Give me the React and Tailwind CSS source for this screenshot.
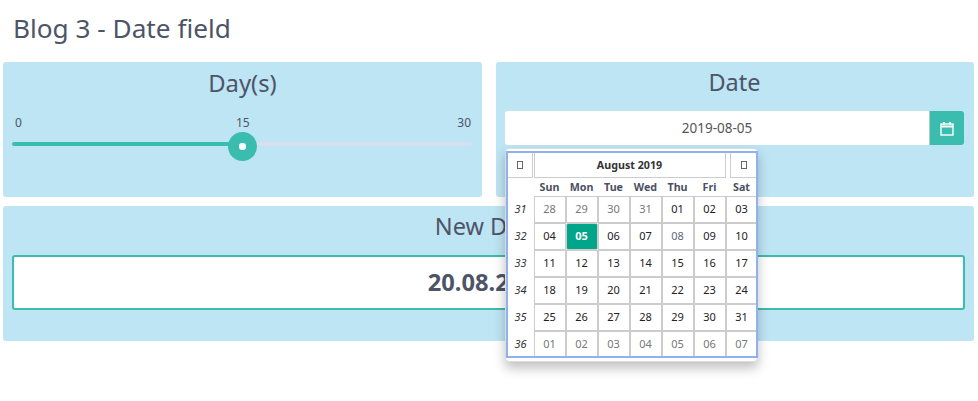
const weeks = [
  { no: 31, days: ["28", "29", "30", "31", "01", "02", "03"] },
  { no: 32, days: ["04", "05", "06", "07", "08", "09", "10"] },
  { no: 33, days: ["11", "12", "13", "14", "15", "16", "17"] },
  { no: 34, days: ["18", "19", "20", "21", "22", "23", "24"] },
  { no: 35, days: ["25", "26", "27", "28", "29", "30", "31"] },
  { no: 36, days: ["01", "02", "03", "04", "05", "06", "07"] },
];
const dayNames = ["Sun", "Mon", "Tue", "Wed", "Thu", "Fri", "Sat"];

// 8월 밖의 날짜는 회색
const isMuted = (w, i) => (w === 0 && i < 4) || w === 5;

function Tofu() {
  return <span className="block w-[6px] h-[8px] border border-[#666]" />;
}

function CalendarIcon() {
  return (
    <svg width="14" height="15" viewBox="0 0 14 15" fill="none" stroke="#fff" strokeWidth="1.4">
      <rect x="1" y="3" width="12" height="11" />
      <path d="M1 5.5h12" strokeWidth="2" />
      <path d="M4 1v3M10 1v3" strokeWidth="2" />
    </svg>
  );
}

function Calendar() {
  return (
    <div className="absolute left-[9px] top-[86px] z-10 w-[253px] h-[214px] bg-white rounded-[4px] border border-[#dcdcdc] pt-[2px] shadow-[0_6px_12px_rgba(0,0,0,0.25)]">
      <div className="h-[207px] -mr-px pl-px pt-px outline-2 -outline-offset-2 outline-[#8fb2ee]">
        <div className="flex h-[26px]">
          <div className="w-[26px] flex items-center justify-center border border-[#ccc]"><Tofu /></div>
          <div className="w-[192px] ml-px flex items-center justify-center border border-[#ccc] pr-px text-[10.7px] font-bold text-[#333]">August 2019</div>
          <div className="w-[28px] ml-[4px] flex items-center justify-center border border-[#ccc]"><Tofu /></div>
        </div>
        <div className="grid grid-cols-[27px_repeat(7,32px)] h-[18px] items-center text-center text-[10.7px] font-bold text-[#4a4f63]">
          <span />
          {dayNames.map((d) => <span key={d} className="pr-px">{d}</span>)}
        </div>
        {weeks.map((week, w) => (
          <div key={week.no} className="grid grid-cols-[27px_repeat(7,32px)] h-[27px] text-[11px]">
            <span className="flex items-center justify-center italic text-[#333]">{week.no}</span>
            {week.days.map((d, i) => {
              const selected = w === 1 && i === 1;
              let cls = "text-[#222]";
              if (selected) cls = "bg-[#00a58a] border-[#00a58a] text-white font-bold rounded-[2px]";
              else if (isMuted(w, i)) cls = "text-[#777]";
              else if (w === 1 && i === 4) cls = "text-[#667]";
              return (
                <span key={i} className={`flex items-center justify-center border border-[#ccc] pr-px ${cls}`}>{d}</span>
              );
            })}
          </div>
        ))}
      </div>
    </div>
  );
}

export default function App() {
  return (
    <div className="w-[978px] h-[401px] bg-white text-[#4e5468] font-['Noto_Sans','Open_Sans',sans-serif] overflow-hidden">
      <h2 className="pl-[13px] pt-[10px] h-[62px] text-[26.2px] leading-[36px]">Blog 3 - Date field</h2>

      <div className="flex gap-[14px] pl-[3px] pr-[4px]">
        <div className="w-[479px] h-[135px] bg-[#bee5f4] rounded-[3px] px-[9px] pt-[6px]">
          <div className="text-center text-[23.8px] leading-[30px]">Day(s)</div>
          <div className="relative mt-[17px]">
            <div className="relative h-[16px] text-[12px] leading-[16px]">
              <span className="absolute left-[3px]">0</span>
              <span className="absolute left-[224px]">15</span>
              <span className="absolute right-[2px]">30</span>
            </div>
            <div className="mt-[11px] h-1 rounded-full bg-[#d8dff0] w-[460px]">
              <div className="h-1 rounded-full bg-[#3abcae] w-[231px]" />
            </div>
            <div className="absolute left-[216px] top-[17px] w-[29px] h-[29px] rounded-full bg-[#3abcae] flex items-center justify-center">
              <span className="w-[7px] h-[7px] rounded-[3px] bg-white" />
            </div>
          </div>
        </div>

        <div className="relative w-[478px] h-[135px] bg-[#bee5f4] rounded-[3px] pl-[9px] pr-[10px] pt-[5px]">
          <div className="text-center text-[23.5px] leading-[30px]">Date</div>
          <div className="flex h-[34px] mt-[14px]">
            <div className="flex-1 bg-white rounded-l-[3px] flex items-center justify-center text-[13.5px] text-[#555]">2019-08-05</div>
            <div className="w-[35px] bg-[#3abcae] rounded-r-[3px] border-l border-[#b5c9c6] flex items-center justify-center"><CalendarIcon /></div>
          </div>
          <Calendar />
        </div>
      </div>

      <div className="mt-[9px] ml-[3px] w-[971px] h-[135px] bg-[#bee5f4] rounded-[3px] px-[9px] pt-[5px]">
        <div className="text-center text-[23.5px] leading-[30px]">New Date</div>
        <div className="mt-[14px] h-[55px] bg-white border-2 border-[#3abcae] rounded-[3px] flex items-center justify-center text-[23.7px] font-bold">20.08.2019</div>
      </div>
    </div>
  );
}
